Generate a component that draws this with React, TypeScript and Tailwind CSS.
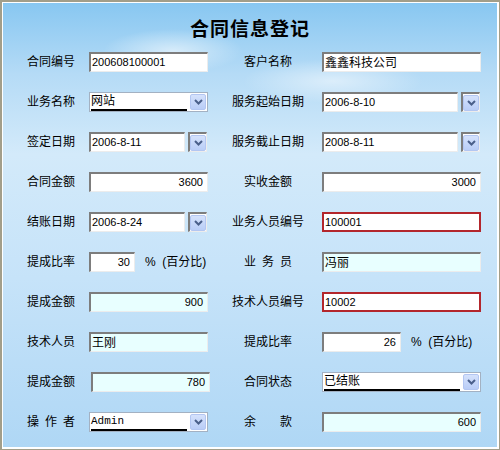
import { ReactNode } from 'react'

type Tone = 'white' | 'cyan'

// ascii values read smaller than the chinese ones in the original form
const isAscii = (s: string) => /^[\x00-\x7f]*$/.test(s)

function Chevron() {
  return (
    <svg width="9" height="6" viewBox="0 0 9 6" fill="none">
      <path d="M1 1l3.5 3.5L8 1" stroke="#4a5f8a" strokeWidth="2" />
    </svg>
  )
}

function DropButton() {
  return (
    <div className="flex h-[16px] w-[16px] items-center justify-center rounded-[2px] border border-[#b3c6f2] bg-[linear-gradient(to_bottom,#d5e2fc,#b9cdf7)]">
      <Chevron />
    </div>
  )
}

function TextBox({
  value,
  width,
  right,
  tone = 'white',
  red,
  className = '',
}: {
  value: string
  width: string
  right?: boolean
  tone?: Tone
  red?: boolean
  className?: string
}) {
  const bg = tone === 'cyan' ? 'bg-[#e8ffff]' : 'bg-white'
  const border = red
    ? 'border-2 border-[#b3262c]'
    : 'border-t-2 border-l-2 border-r border-b border-t-[#7d7d7d] border-l-[#7d7d7d] border-r-[#ececec] border-b-[#ececec]'
  const size = isAscii(value) ? 'text-[11px]' : 'text-[12px]'
  return (
    <div
      className={`box-border flex h-[20px] items-center ${width} ${bg} ${border} ${
        right ? 'justify-end pr-[4px]' : 'pl-[1px]'
      } ${size} leading-none text-black ${className}`}
    >
      {value}
    </div>
  )
}

function Combo({ value, width, mono }: { value: string; width: string; mono?: boolean }) {
  return (
    <div className={`box-border flex h-[20px] items-center border border-[#a3b1c2] bg-white pl-[1px] pr-[1px] ${width}`}>
      <div
        className={`flex h-[17px] flex-1 items-center border-b-2 border-black leading-none ${
          mono ? "font-['Liberation_Mono',monospace] text-[11px]" : 'text-[12px]'
        }`}
      >
        {value}
      </div>
      <div className="ml-[3px]">
        <DropButton />
      </div>
    </div>
  )
}

function DateCombo({ value, boxWidth }: { value: string; boxWidth: string }) {
  return (
    <div className="flex items-center gap-[3px]">
      <TextBox value={value} width={boxWidth} />
      <div className="box-border flex h-[20px] w-[19px] items-center justify-center border-t-2 border-l-2 border-r border-b border-t-[#7d7d7d] border-l-[#7d7d7d] border-r-[#ececec] border-b-[#ececec] bg-white">
        <DropButton />
      </div>
    </div>
  )
}

function Label({ text, side }: { text: string; side: 'left' | 'right' }) {
  const spread = text.includes(' ')
  const chars = text.split(' ').filter(Boolean)
  const inner = spread ? (
    <span className="flex w-[48px] justify-between">
      {chars.map((c, i) => (
        <span key={i}>{c}</span>
      ))}
    </span>
  ) : (
    <span>{text}</span>
  )
  if (side === 'left') {
    return <div className="flex w-[86px] pl-[24px] text-[12px] text-black">{inner}</div>
  }
  return <div className="flex w-[100px] justify-center pr-[8px] text-[12px] text-black">{inner}</div>
}

function Percent() {
  return <span className="ml-[10px] whitespace-pre text-[12px] text-black">%  (百分比)</span>
}

function Row({
  left,
  leftField,
  right,
  rightField,
}: {
  left: string
  leftField: ReactNode
  right: string
  rightField: ReactNode
}) {
  return (
    <div className="flex h-[40px] items-center">
      <Label text={left} side="left" />
      <div className="flex w-[133px] items-center">{leftField}</div>
      <Label text={right} side="right" />
      <div className="flex items-center">{rightField}</div>
    </div>
  )
}

export default function App() {
  return (
    <div className="box-border h-[450px] w-[500px] border-t-2 border-l-2 border-r border-b border-[#a29e8a] font-['Liberation_Sans','Noto_Sans_CJK_SC',sans-serif]">
      <div className="box-border h-full w-full border-t border-l border-r-2 border-b-2 border-white bg-[image:radial-gradient(ellipse_70px_22px_at_170px_48px,rgba(255,255,255,0.55),transparent),radial-gradient(ellipse_90px_22px_at_330px_78px,rgba(255,255,255,0.5),transparent),linear-gradient(to_bottom,#88c7f1_0%,#b5dbf6_16%,#d3eafa_34%,#c6e3f9_62%,#afd7f5_100%)]">
        <div className="flex h-[39px] items-center justify-center pt-[16px]">
          <h1 className="text-[19px] font-bold tracking-[1px] text-black">合同信息登记</h1>
        </div>

        <Row
          left="合同编号"
          leftField={<TextBox value="200608100001" width="w-[119px]" />}
          right="客户名称"
          rightField={<TextBox value="鑫鑫科技公司" width="w-[159px]" />}
        />
        <Row
          left="业务名称"
          leftField={<Combo value="网站" width="w-[119px]" />}
          right="服务起始日期"
          rightField={<DateCombo value="2006-8-10" boxWidth="w-[136px]" />}
        />
        <Row
          left="签定日期"
          leftField={<DateCombo value="2006-8-11" boxWidth="w-[96px]" />}
          right="服务截止日期"
          rightField={<DateCombo value="2008-8-11" boxWidth="w-[136px]" />}
        />
        <Row
          left="合同金额"
          leftField={<TextBox value="3600" width="w-[119px]" right />}
          right="实收金额"
          rightField={<TextBox value="3000" width="w-[159px]" right />}
        />
        <Row
          left="结账日期"
          leftField={<DateCombo value="2006-8-24" boxWidth="w-[96px]" />}
          right="业务人员编号"
          rightField={<TextBox value="100001" width="w-[159px]" red />}
        />
        <Row
          left="提成比率"
          leftField={
            <>
              <TextBox value="30" width="w-[46px]" right />
              <Percent />
            </>
          }
          right="业 务 员"
          rightField={<TextBox value="冯丽" width="w-[159px]" tone="cyan" />}
        />
        <Row
          left="提成金额"
          leftField={<TextBox value="900" width="w-[119px]" right tone="cyan" />}
          right="技术人员编号"
          rightField={<TextBox value="10002" width="w-[159px]" red />}
        />
        <Row
          left="技术人员"
          leftField={<TextBox value="王刚" width="w-[119px]" tone="cyan" />}
          right="提成比率"
          rightField={
            <>
              <TextBox value="26" width="w-[79px]" right />
              <Percent />
            </>
          }
        />
        <Row
          left="提成金额"
          leftField={<TextBox value="780" width="w-[119px]" right tone="cyan" className="ml-[2px]" />}
          right="合同状态"
          rightField={<Combo value="已结账" width="w-[159px]" />}
        />
        <Row
          left="操 作 者"
          leftField={<Combo value="Admin" width="w-[119px]" mono />}
          right="余 款"
          rightField={<TextBox value="600" width="w-[159px]" right tone="cyan" />}
        />
      </div>
    </div>
  )
}
